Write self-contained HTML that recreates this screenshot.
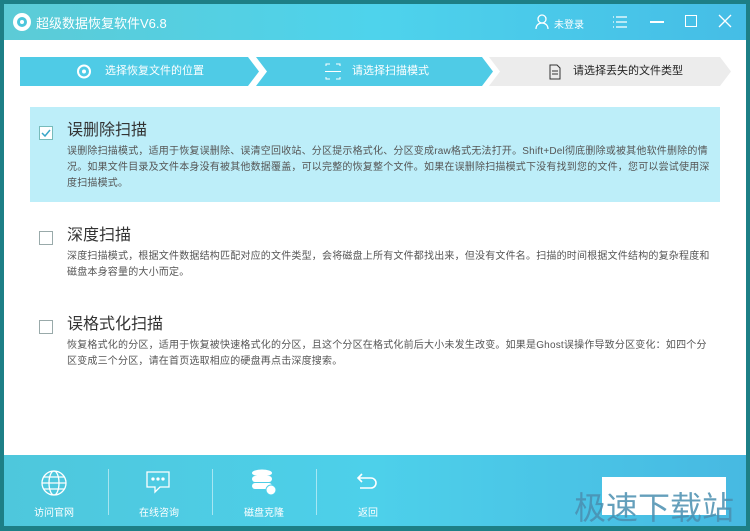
<!DOCTYPE html><html><head><meta charset="utf-8"><style>
*{margin:0;padding:0;box-sizing:border-box}
body{width:750px;height:531px;background:#1d7f86;font-family:"Liberation Sans","Noto Sans CJK SC",sans-serif;position:relative;overflow:hidden}
.win{position:absolute;left:4px;top:4px;width:742px;height:522px;background:#fff}
.title{position:absolute;left:0;top:0;width:742px;height:36px;background:linear-gradient(90deg,#5ccbd6,#4ed3ec 50%,#45bde6);color:#fff}
.abs{position:absolute}
.step{position:absolute;top:53px;height:29px;color:#fff;font-size:11px;line-height:29px}
.card{position:absolute;left:26px;width:690px}
.card h3{position:absolute;left:37px;top:14px;font-size:16px;line-height:20px;font-weight:normal;color:#333}
.card p{position:absolute;left:37px;top:37px;width:648px;font-size:10px;line-height:16px;color:#555;letter-spacing:0.2px}
.cb{position:absolute;left:9px;top:19px;width:14px;height:14px;border:1px solid #9aa;background:#fff}
.foot{position:absolute;left:0;top:451px;width:742px;height:71px;background:linear-gradient(90deg,#4ec7dc,#4dd0ea 50%,#47b9e2)}
.fi{position:absolute;top:0;width:80px;text-align:center;color:#fff;font-size:10px}
.sep{position:absolute;top:14px;width:1px;height:46px;background:rgba(255,255,255,.5)}
</style></head><body><div class="win">
<div class="title">
<svg class="abs" style="left:8px;top:8px" width="20" height="20"><circle cx="10" cy="10" r="9" fill="#fff"/><circle cx="10" cy="10" r="5" fill="#4cc6dc"/><circle cx="10" cy="10" r="2" fill="#fff"/></svg>
<div class="abs" style="left:32px;top:9px;font-size:13px">超级数据恢复软件V6.8</div>
<svg class="abs" style="left:531px;top:10px" width="14" height="16" fill="none" stroke="#fff" stroke-width="1.3"><circle cx="7" cy="5" r="4"/><path d="M1 15c0-4 3-6 6-6s6 2 6 6"/></svg>
<div class="abs" style="left:550px;top:12px;font-size:10px">未登录</div>
<svg class="abs" style="left:608px;top:10px" width="16" height="16" stroke="#fff" stroke-width="1.3"><path d="M4 3h11M4 8h11M4 13h11M1 3h1M1 8h1M1 13h1"/></svg>
<div class="abs" style="left:646px;top:17px;width:14px;height:1.5px;background:#fff"></div>
<div class="abs" style="left:681px;top:11px;width:12px;height:12px;border:1.3px solid #fff"></div>
<svg class="abs" style="left:714px;top:10px" width="14" height="14" stroke="#fff" stroke-width="1.3"><path d="M1 1l12 12M13 1L1 13"/></svg>
</div>
<svg class="abs" style="left:16px;top:53px" width="712" height="29"><polygon points="0,0 228,0 239,14.5 228,29 0,29" fill="#4fcbe6"/><polygon points="236,0 462,0 473,14.5 462,29 236,29 247,14.5" fill="#4fcbe6"/><polygon points="469,0 700,0 711,14.5 700,29 469,29 480,14.5" fill="#ececec"/>
<circle cx="64" cy="14.5" r="6" fill="none" stroke="#fff" stroke-width="2"/><circle cx="64" cy="14.5" r="2" fill="#fff"/>
<path d="M306 9v-2h4M316 7h4v2M306 20v2h4M316 22h4v-2M305 14.5h16" stroke="#fff" fill="none"/>
<path d="M530 8h7l3 3v11h-10z M532 14h6M532 17h6" stroke="#333" fill="none"/></svg>
<div class="step" style="left:101px">选择恢复文件的位置</div>
<div class="step" style="left:348px">请选择扫描模式</div>
<div class="step" style="left:569px;color:#222">请选择丢失的文件类型</div>
<div class="card" style="top:103px;height:95px;background:#bdeef9"><div class="cb" style="border-color:#7bb"><svg width="12" height="12" style="position:absolute;left:0;top:0"><path d="M2 6l3 3 5-6" stroke="#3aa6c8" stroke-width="1.5" fill="none"/></svg></div><h3>误删除扫描</h3><p>误删除扫描模式，适用于恢复误删除、误清空回收站、分区提示格式化、分区变成raw格式无法打开。Shift+Del彻底删除或被其他软件删除的情况。如果文件目录及文件本身没有被其他数据覆盖，可以完整的恢复整个文件。如果在误删除扫描模式下没有找到您的文件，您可以尝试使用深度扫描模式。</p></div>
<div class="card" style="top:208px;height:80px"><div class="cb"></div><h3>深度扫描</h3><p>深度扫描模式，根据文件数据结构匹配对应的文件类型，会将磁盘上所有文件都找出来，但没有文件名。扫描的时间根据文件结构的复杂程度和磁盘本身容量的大小而定。</p></div>
<div class="card" style="top:297px;height:80px"><div class="cb"></div><h3>误格式化扫描</h3><p>恢复格式化的分区，适用于恢复被快速格式化的分区，且这个分区在格式化前后大小未发生改变。如果是Ghost误操作导致分区变化：如四个分区变成三个分区，请在首页选取相应的硬盘再点击深度搜索。</p></div>
<div class="foot">
<div class="fi" style="left:10px"><svg width="28" height="28" style="margin-top:14px" fill="none" stroke="#fff" stroke-width="1.3"><circle cx="14" cy="14" r="12"/><ellipse cx="14" cy="14" rx="5" ry="12"/><path d="M2 14h24M4 8h20M4 20h20"/></svg><div style="margin-top:4px">访问官网</div></div>
<div class="sep" style="left:104px"></div>
<div class="fi" style="left:115px"><svg width="28" height="28" style="margin-top:14px" fill="none" stroke="#fff" stroke-width="1.3"><path d="M2 3h22v15h-9l-5 5v-5H2z"/><circle cx="8" cy="10" r="1" fill="#fff"/><circle cx="13" cy="10" r="1" fill="#fff"/><circle cx="18" cy="10" r="1" fill="#fff"/></svg><div style="margin-top:4px">在线咨询</div></div>
<div class="sep" style="left:208px"></div>
<div class="fi" style="left:220px"><svg width="28" height="28" style="margin-top:14px" fill="#fff"><ellipse cx="12" cy="4" rx="10" ry="3.5"/><rect x="2" y="7" width="20" height="6" rx="3"/><rect x="2" y="14" width="20" height="6" rx="3"/><circle cx="21" cy="21" r="5" stroke="#4dd0ea"/></svg><div style="margin-top:4px">磁盘克隆</div></div>
<div class="sep" style="left:312px"></div>
<div class="fi" style="left:324px"><svg width="28" height="28" style="margin-top:14px" fill="none" stroke="#fff" stroke-width="1.6"><path d="M8 5L4 9l4 4M4 9h13a5 5 0 010 10H6"/></svg><div style="margin-top:4px">返回</div></div>
<div class="abs" style="left:598px;top:22px;width:124px;height:38px;background:#fff"></div>
<div class="abs" style="left:570px;top:28px;font-size:32px;color:#4a8fb0;opacity:.85;letter-spacing:0px">极速下载站</div>
</div>
</div></body></html>
